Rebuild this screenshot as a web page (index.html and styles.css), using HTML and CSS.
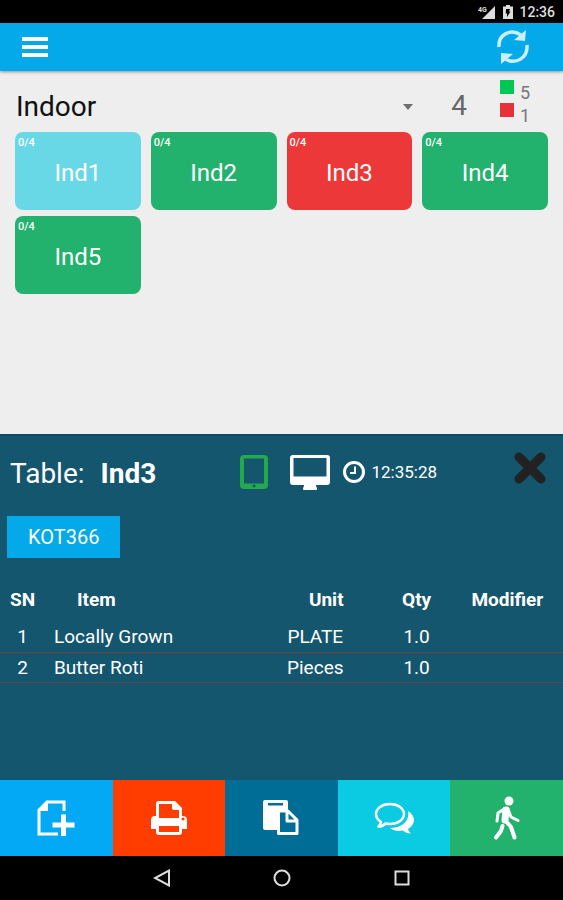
FILE: index.html
```
<!DOCTYPE html>
<html lang="en">
<head>
    <meta charset="UTF-8">
    <meta name="viewport" content="width=device-width, initial-scale=1.0">
    <title>Indoor tables</title>
    <link rel="stylesheet" href="styles.css">
</head>
<body>
    <div class="status-bar">
        <svg class="signal" viewBox="0 0 20 14" aria-hidden="true">
            <text x="1" y="7" class="signal-text">4G</text>
            <path d="M18 1v13H5z" fill="#ddd"/>
        </svg>
        <svg class="battery" viewBox="0 0 10 14" aria-hidden="true">
            <path d="M3 0h4v1.500h3V14H0V1.500h3z" fill="#ddd"/>
            <path d="M3 4h4L6 6.500h1.500L4 12V8.500H2.800z" fill="#000"/>
        </svg>
        <span class="time">12:36</span>
    </div>

    <header class="toolbar">
        <button class="icon-button" aria-label="Menu">
            <svg width="28" height="20" viewBox="0 0 28 20" fill="#fff">
                <path d="M1 0h26v4H1zM1 8h26v4H1zM1 16h26v4H1z"/>
            </svg>
        </button>
        <button class="icon-button" aria-label="Refresh">
            <svg width="34" height="36" viewBox="0 0 34 36">
                <g fill="none" stroke="#c9effc" stroke-width="3.500">
                    <path d="M3 18C2 6 14-1 25 6"/>
                    <path d="M31 16C32 29 20 36 9 30"/>
                </g>
                <path d="M30 1l-1 11-11-1zM5 35V24l12 1z" fill="#c9effc"/>
            </svg>
        </button>
    </header>

    <main class="floor">
        <div class="filter">
            <div class="area">
                <select class="area-select" aria-label="Area">
                    <option>Indoor</option>
                </select>
                <svg class="caret" width="10" height="6" viewBox="0 0 10 6" aria-hidden="true">
                    <path d="M0 0h10L5 6z" fill="#707070"/>
                </svg>
            </div>
            <span class="seats">4</span>
            <ul class="legend">
                <li><span class="swatch free"></span><span class="count">5</span></li>
                <li><span class="swatch busy"></span><span class="count">1</span></li>
            </ul>
        </div>

        <div class="tables">
            <button class="tile selected"><span class="used">0/4</span>Ind1</button>
            <button class="tile"><span class="used">0/4</span>Ind2</button>
            <button class="tile occupied"><span class="used">0/4</span>Ind3</button>
            <button class="tile"><span class="used">0/4</span>Ind4</button>
            <button class="tile"><span class="used">0/4</span>Ind5</button>
        </div>
    </main>

    <section class="order">
        <div class="order-head">
            <h1>Table: <strong>Ind3</strong></h1>
            <div class="source">
                <svg width="28" height="34" viewBox="0 0 28 34" aria-hidden="true">
                    <path fill="#25a94e" fill-rule="evenodd" d="M4 0h20q4 0 4 4v26q0 4-4 4H4q-4 0-4-4V4q0-4 4-4zM4 3.500v25h20v-25zM14 29.500a1.500 1.500 0 1 0 .1 0z"/>
                </svg>
                <svg class="monitor" width="40" height="35" viewBox="0 0 40 35" aria-hidden="true">
                    <path fill="#fff" fill-rule="evenodd" d="M3 0h34q3 0 3 3v24q0 3-3 3H26q0 2 1 3 .5 2-1 2H14q-1.500 0-1-2 1-1 1-3H3q-3 0-3-3V3q0-3 3-3zM3.500 3v18.500h33V3z"/>
                </svg>
                <svg class="clock" width="22" height="22" viewBox="0 0 22 22" aria-hidden="true">
                    <circle cx="11" cy="11" r="9.500" fill="none" stroke="#fff" stroke-width="3"/>
                    <path d="M12 5.500V12H7" fill="none" stroke="#fff" stroke-width="2"/>
                </svg>
                <span class="order-time">12:35:28</span>
            </div>
            <button class="icon-button close" aria-label="Close">
                <svg width="32" height="32" viewBox="0 0 32 32">
                    <path d="M5 5l22 22M27 5L5 27" stroke="#222" stroke-width="9" stroke-linecap="round"/>
                </svg>
            </button>
        </div>

        <button class="kot">KOT366</button>

        <table class="items">
            <thead>
                <tr>
                    <th class="sn">SN</th>
                    <th class="item">Item</th>
                    <th class="unit">Unit</th>
                    <th class="qty">Qty</th>
                    <th class="modifier">Modifier</th>
                </tr>
            </thead>
            <tbody>
                <tr>
                    <td>1</td>
                    <td class="item">Locally Grown</td>
                    <td>PLATE</td>
                    <td>1.0</td>
                    <td></td>
                </tr>
                <tr>
                    <td>2</td>
                    <td class="item">Butter Roti</td>
                    <td>Pieces</td>
                    <td>1.0</td>
                    <td></td>
                </tr>
            </tbody>
        </table>
    </section>

    <div class="actions">
        <button class="action add" aria-label="New order">
            <svg width="38" height="36" viewBox="0 0 38 36">
                <path d="M27 11V2H10L2 10v24h19" fill="none" stroke="#fff" stroke-width="3"/>
                <path d="M11 1v10H1zM24 14.500h5v8h8.500v5H29V36h-5v-8.500h-8.500v-5H24z" fill="#fff"/>
            </svg>
        </button>
        <button class="action print" aria-label="Print">
            <svg width="38" height="34" viewBox="0 0 38 34">
                <path fill="#fff" fill-rule="evenodd" d="M6 15V3q0-3 3-3h16l7 7v8h1q4 0 4 4v9h-5v3q0 3-3 3H9q-3 0-3-3v-3H1v-9q0-4 4-4zM9 3v14h20V9h-5q-2 0-2-2V3zM9 25v6h20v-6zM33 16.500a1.500 1.500 0 1 0 .1 0z"/>
            </svg>
        </button>
        <button class="action paste" aria-label="Copy order">
            <svg width="36" height="36" viewBox="0 0 36 36">
                <path fill="#fff" fill-rule="evenodd" d="M2 0h21q2 0 2 2v9H14v19H2q-2 0-2-2V2q0-2 2-2zM5 3v2.500h15V3z"/>
                <path d="M15.500 11H25l9 9v13.500H15.500zM24 11v10h10" fill="none" stroke="#fff" stroke-width="3" stroke-linejoin="round"/>
            </svg>
        </button>
        <button class="action chat" aria-label="Messages">
            <svg width="40" height="32" viewBox="0 0 40 32">
                <path d="M16 2C8 2 2 6.500 2 12c0 3.500 2 6 5 8-.5 2-1 3-2.500 4.500 3 0 5-1 7-3 1.500.3 3 .5 4.500.5 8 0 14-4.500 14-10S24 2 16 2z" fill="none" stroke="#fff" stroke-width="2.500" stroke-linejoin="round"/>
                <path d="M34 9c8 5 8 13 0 18 .5 2 1.500 3 3 4.500-3.500 0-6-1-8-3-5 1-10 0-13-2.500 12 0 20-7 18-17z" fill="#fff"/>
            </svg>
        </button>
        <button class="action leave" aria-label="Leave table">
            <svg width="28" height="44" viewBox="0 0 28 44">
                <circle cx="16" cy="5" r="4.500" fill="#fff"/>
                <g fill="none" stroke="#fff" stroke-linecap="round" stroke-linejoin="round">
                    <path d="M13 14l-1 10" stroke-width="7"/>
                    <path d="M12 12.500L5 17 4 25M15 13l3 8 7 3.500" stroke-width="3"/>
                    <path d="M12 24l6 7 3.500 10.500M9.500 30L8 35l-5 6.500" stroke-width="4"/>
                </g>
            </svg>
        </button>
    </div>

    <nav class="system-nav">
        <button class="icon-button" aria-label="Back">
            <svg width="18" height="18" viewBox="0 0 18 18"><path d="M16 1.500v15L2 9z"/></svg>
        </button>
        <button class="icon-button" aria-label="Home">
            <svg width="18" height="18" viewBox="0 0 18 18"><circle cx="9" cy="9" r="7.500"/></svg>
        </button>
        <button class="icon-button" aria-label="Recent apps">
            <svg width="18" height="18" viewBox="0 0 18 18"><path d="M2.500 2.500h13v13h-13z"/></svg>
        </button>
    </nav>
</body>
</html>
```
FILE: styles.css
```
* {
    margin: 0;
    padding: 0;
    box-sizing: border-box;
}

body {
    font-family: Roboto, "Liberation Sans", sans-serif;
    background: #eee;
    min-height: 100vh;
    display: flex;
    flex-direction: column;
}

button {
    border: none;
    font-family: inherit;
    color: white;
    cursor: pointer;
}

svg {
    display: block;
}

.icon-button {
    background: none;
}

/* status bar */

.status-bar {
    height: 23px;
    padding: 0 8px;
    background: black;
    color: #ddd;
    display: flex;
    align-items: center;
    justify-content: flex-end;
}

.signal {
    width: 20px;
    height: 14px;
}

.signal-text {
    font-size: 7px;
    font-weight: bold;
    fill: #ddd;
}

.battery {
    width: 10px;
    height: 14px;
    margin: 0 6px;
}

.time {
    font-size: 14px;
    font-weight: 500;
}

/* toolbar */

.toolbar {
    height: 48px;
    padding: 0 33px 0 21px;
    background: #03a9e8;
    box-shadow: 0 1px 3px rgba(0,0,0,0.4);
    display: flex;
    align-items: center;
    justify-content: space-between;
}

/* floor plan */

.floor {
    flex: 1;
    padding: 7px 15px;
}

.filter {
    height: 54px;
    display: flex;
    align-items: center;
}

.area {
    position: relative;
    flex: 1;
    padding-top: 4px;
}

.area-select {
    appearance: none;
    width: 100%;
    padding-left: 1px;
    border: none;
    background: none;
    font-family: inherit;
    font-size: 28px;
    line-height: 36px;
    color: #111;
}

.caret {
    position: absolute;
    right: 6px;
    top: 19px;
}

.seats {
    padding: 0 33px 0 32px;
    font-size: 28px;
    color: #666;
}

.legend {
    width: 48px;
    height: 50px;
    list-style: none;
}

.legend li {
    height: 23px;
    display: flex;
    gap: 6px;
}

.swatch {
    width: 14px;
    height: 14px;
}

.swatch.free {
    background: #00c853;
}

.swatch.busy {
    background: #e53238;
}

.count {
    padding-top: 3px;
    font-size: 18px;
    line-height: 20px;
    color: #777;
}

.tables {
    display: grid;
    grid-template-columns: repeat(4, 1fr);
    gap: 6px 10px;
}

.tile {
    position: relative;
    height: 78px;
    padding-top: 3px;
    border-radius: 8px;
    background: #22b26e;
    font-size: 24px;
}

.tile.selected {
    background: #68d8e6;
}

.tile.occupied {
    background: #ec3838;
}

.used {
    position: absolute;
    top: 4px;
    left: 3px;
    font-size: 11px;
    font-weight: 500;
}

/* order panel */

.order {
    padding-bottom: 97px;
    border-top: 2px solid #0d4a68;
    background: #15566f;
    color: white;
}

.order-head {
    height: 76px;
    padding: 0 17px 0 10px;
    display: flex;
    align-items: center;
}

.order-head h1 {
    width: 43%;
    font-size: 28px;
    font-weight: 400;
    white-space: nowrap;
}

.order-head strong {
    margin-left: 9px;
}

.source {
    flex: 1;
    padding-bottom: 3px;
    display: flex;
    align-items: center;
}

.monitor {
    margin: 0 13px 0 22px;
}

.order-time {
    margin-left: 6px;
    font-size: 17px;
    font-weight: 400;
}

.close {
    padding-bottom: 12px;
}

.kot {
    height: 42px;
    margin: 4px 7px 20px;
    padding: 0 21px;
    background: #03a9e8;
    font-size: 20px;
}

.items {
    width: 100%;
    table-layout: fixed;
    border-collapse: collapse;
    font-size: 19px;
    line-height: 22px;
    text-align: center;
}

.items th {
    height: 45px;
}

.items td {
    height: 30px;
    border-bottom: 1px solid #6e4046;
}

.sn {
    width: 8%;
}

.item {
    width: 38%;
    padding-left: 9px;
    text-align: left;
}

th.item {
    padding-left: 32px;
}

.unit {
    width: 20%;
    padding-left: 22px;
}

.qty {
    width: 16%;
}

.modifier {
    width: 18%;
    padding-right: 10px;
}

/* bottom actions */

.actions {
    display: grid;
    grid-template-columns: repeat(5, 1fr);
}

.action {
    height: 76px;
    display: flex;
    align-items: center;
    justify-content: center;
}

.add {
    background: #03a9f4;
}

.print {
    background: #ff3d00;
}

.paste {
    background: #006d96;
}

.chat {
    background: #0bcbe3;
}

.leave {
    background: #22b26e;
}

.system-nav {
    height: 44px;
    background: black;
    display: flex;
    align-items: center;
    justify-content: center;
    gap: 102px;
}

.system-nav svg {
    fill: none;
    stroke: #ddd;
    stroke-width: 2;
}
```
